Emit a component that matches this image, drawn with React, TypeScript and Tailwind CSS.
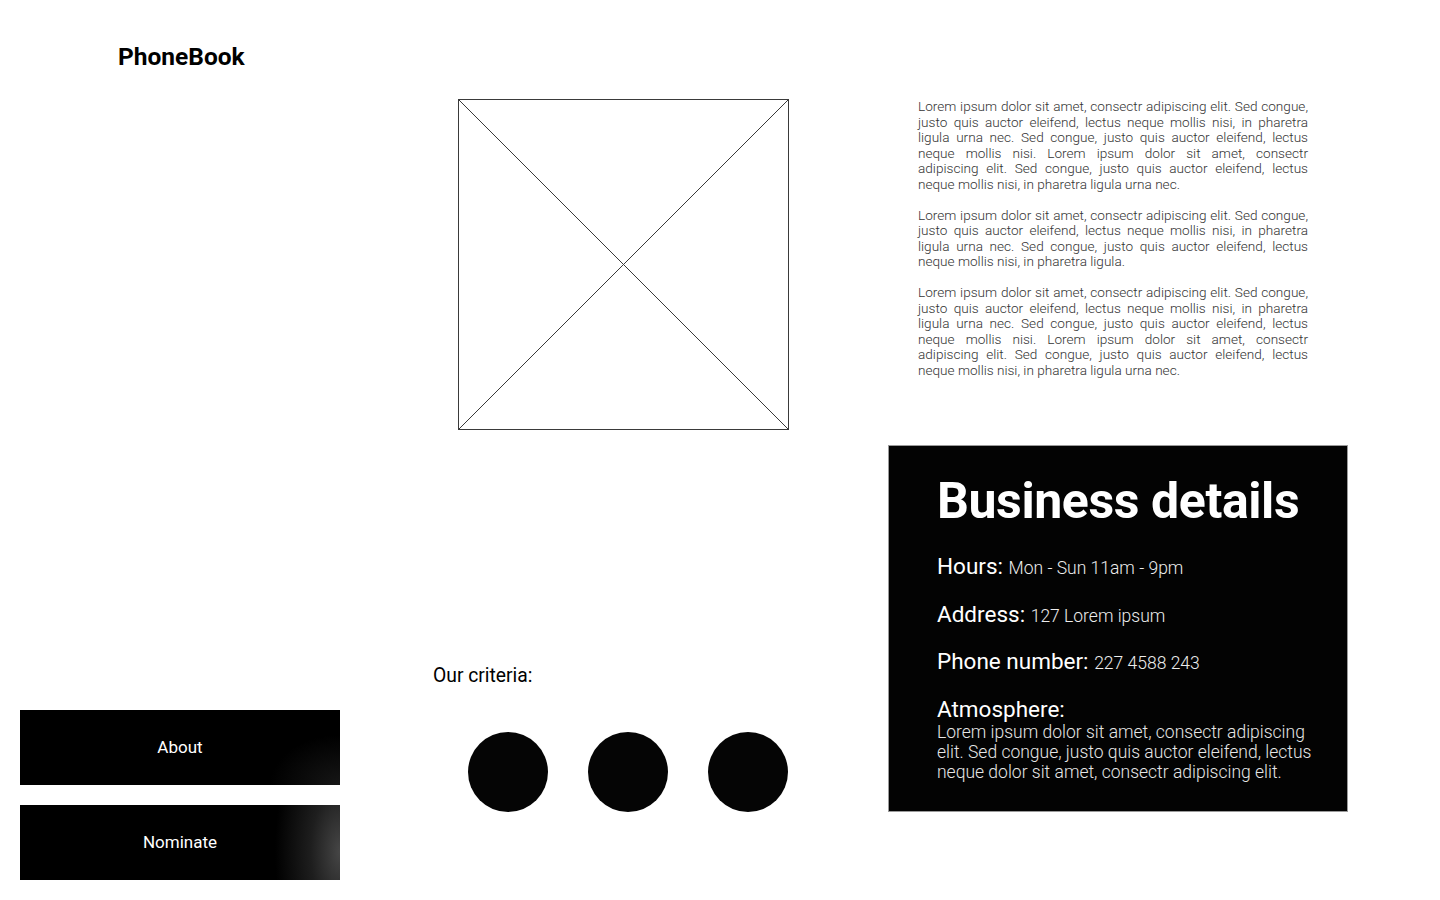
import React from "react";

const lorem1 =
  "Lorem ipsum dolor sit amet, consectr adipiscing elit. Sed congue, justo quis auctor eleifend, lectus neque mollis nisi, in pharetra ligula urna nec. Sed congue, justo quis auctor eleifend, lectus neque mollis nisi. Lorem ipsum dolor sit amet, consectr adipiscing elit. Sed congue, justo quis auctor eleifend, lectus neque mollis nisi, in pharetra ligula urna nec.";
const lorem2 =
  "Lorem ipsum dolor sit amet, consectr adipiscing elit. Sed congue, justo quis auctor eleifend, lectus neque mollis nisi, in pharetra ligula urna nec. Sed congue, justo quis auctor eleifend, lectus neque mollis nisi, in pharetra ligula.";

function Placeholder() {
  return (
    <div className="w-[331px] h-[331px] border border-[#3a3a3a]">
      <svg width="100%" height="100%" viewBox="0 0 100 100" preserveAspectRatio="none">
        <line x1="0" y1="0" x2="100" y2="100" stroke="#3a3a3a" strokeWidth="1" vectorEffect="non-scaling-stroke" />
        <line x1="100" y1="0" x2="0" y2="100" stroke="#3a3a3a" strokeWidth="1" vectorEffect="non-scaling-stroke" />
      </svg>
    </div>
  );
}

function DetailRow({ label, value }: { label: string; value: string }) {
  return (
    <div className="text-[22.5px] leading-[26px] font-normal">
      {label} <span className="text-[17.5px] leading-[17px] font-light text-[#ededed]">{value}</span>
    </div>
  );
}

export default function App() {
  return (
    <div
      className="w-[1440px] h-[900px] bg-white flex text-black"
      style={{ fontFamily: "Roboto, 'Liberation Sans', sans-serif" }}
    >
      {/* Left column */}
      <aside className="w-[360px] flex flex-col">
        <div className="pl-[118px] pt-[42px] text-[24.5px] leading-[30px] font-bold">PhoneBook</div>
        <div className="flex-1" />
        <div className="flex flex-col gap-[20px] pl-[20px] pb-[20px]">
          <button className="w-[320px] h-[75px] text-white text-[17px] font-normal bg-[radial-gradient(ellipse_70px_50px_at_100%_100%,#161616_0%,#000_100%)]">
            About
          </button>
          <button className="w-[320px] h-[75px] text-white text-[17px] font-normal bg-[radial-gradient(ellipse_65px_140px_at_100%_62%,#464646_0%,#1e1e1e_45%,#000_100%)]">
            Nominate
          </button>
        </div>
      </aside>

      {/* Middle column */}
      <main className="w-[528px] flex flex-col">
        <div className="pt-[99px] pl-[98px]">
          <Placeholder />
        </div>
        <div className="mt-[234px] pl-[73px] text-[19.3px] leading-[24px]">Our criteria:</div>
        <div className="mt-[44px] pl-[108px] flex gap-[40px]">
          <div className="w-[80px] h-[80px] rounded-full bg-[#050505]" />
          <div className="w-[80px] h-[80px] rounded-full bg-[#050505]" />
          <div className="w-[80px] h-[80px] rounded-full bg-[#050505]" />
        </div>
      </main>

      {/* Right column */}
      <section className="flex-1 flex flex-col">
        <div className="h-[445px] pt-[99px] pl-[30px]">
          <div className="w-[390px] flex flex-col gap-[15.5px] text-[13.6px] leading-[15.5px] font-light text-[#333333] text-justify">
            <p>{lorem1}</p>
            <p>{lorem2}</p>
            <p>{lorem1}</p>
          </div>
        </div>
        <div className="w-[460px] h-[367px] bg-[#030303] border border-[#9a9a9a] text-white pl-[48px] pt-[25px]">
          <h2 className="text-[50px] leading-[60px] font-bold tracking-[-0.4px]">Business details</h2>
          <div className="mt-[22px] flex flex-col gap-[21.5px]">
            <DetailRow label="Hours:" value="Mon - Sun 11am - 9pm" />
            <DetailRow label="Address:" value="127 Lorem ipsum" />
            <DetailRow label="Phone number:" value="227 4588 243" />
            <div>
              <div className="text-[22.5px] leading-[26px]">Atmosphere:</div>
              <p className="text-[17.5px] leading-[20px] font-light text-[#e6e6e6]">
                Lorem ipsum dolor sit amet, consectr adipiscing
                <br />
                elit. Sed congue, justo quis auctor eleifend, lectus
                <br />
                neque dolor sit amet, consectr adipiscing elit.
              </p>
            </div>
          </div>
        </div>
      </section>
    </div>
  );
}
